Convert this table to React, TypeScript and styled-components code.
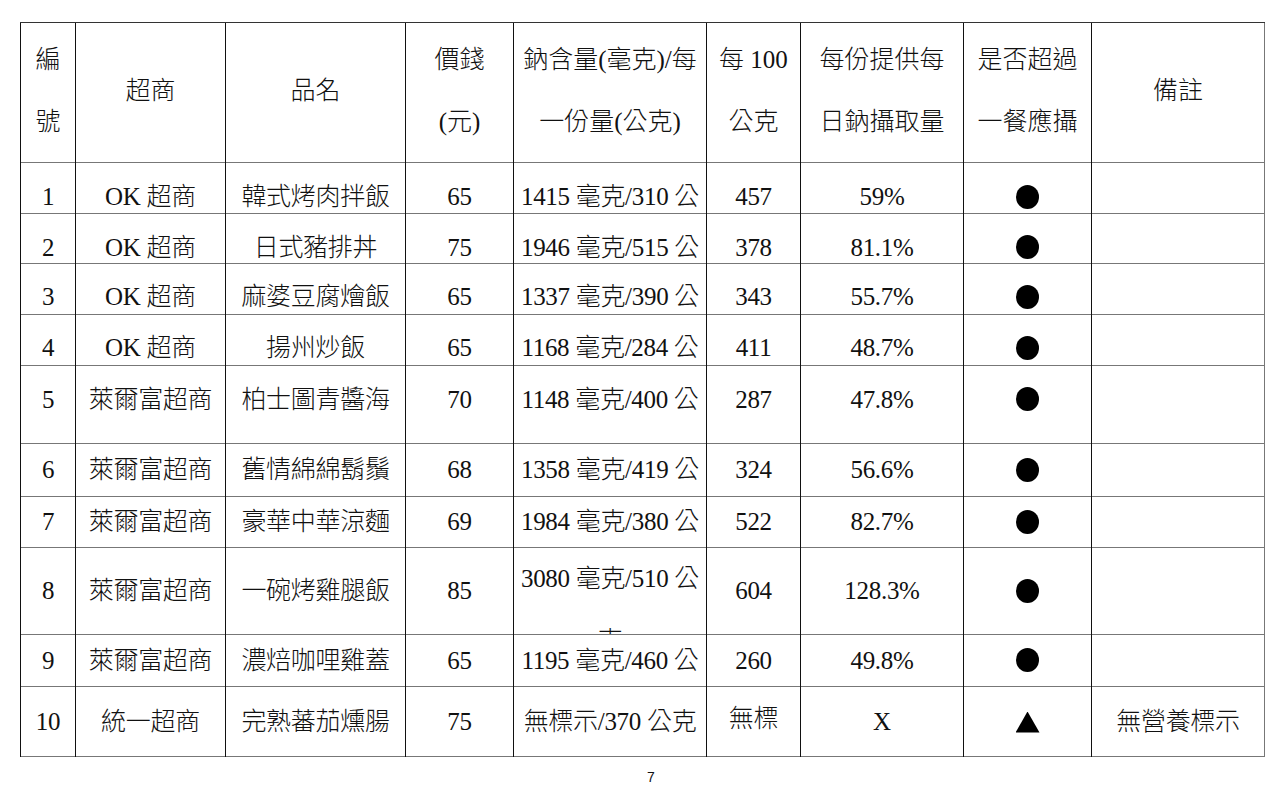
import React from 'react'
import styled, { createGlobalStyle } from 'styled-components'

const GlobalStyle = createGlobalStyle`
  html, body {
    margin: 0;
    padding: 0;
    background: #fff;
  }
  body {
    font-family: "Liberation Serif", "Noto Sans CJK TC", serif;
    color: #111;
  }
`

const Page = styled.div`
  width: 1282px;
  padding: 22px 0 0 20px;
  box-sizing: border-box;
`

const Sheet = styled.table`
  border-collapse: collapse;
  table-layout: fixed;
  width: 1244px;
  font-size: 25px;
  font-weight: 300;
  border-right: 1px solid #777;
  border-bottom: 1px solid #777;
`

const Row = styled.tr<{ $h: number }>`
  height: ${p => p.$h}px;
`

const Cell = styled.td<{ $shift?: number; $top?: boolean }>`
  border-left: 1px solid #111;
  border-top: 1px solid #777;
  text-align: center;
  vertical-align: ${p => (p.$top ? 'top' : 'middle')};
  line-height: 30px;
  white-space: nowrap;
  overflow: hidden;
  letter-spacing: -0.3px;
  padding: ${p => (p.$shift && p.$shift > 0 ? p.$shift * 2 : 0)}px 0
    ${p => (p.$shift && p.$shift < 0 ? -p.$shift * 2 : 0)}px;
`

const HeadCell = styled.th`
  border-left: 1px solid #111;
  border-top: 1px solid #333;
  font-weight: 300;
  text-align: center;
  vertical-align: middle;
  line-height: 62px;
  white-space: nowrap;
  padding: 0 0 4px;
`

const Clip = styled.div<{ $h: number }>`
  height: ${p => p.$h}px;
  overflow: hidden;
  line-height: 62px;
`

const Dot = styled.span`
  display: inline-block;
  width: 23px;
  height: 24px;
  border-radius: 50%;
  background: #000;
  vertical-align: middle;
  margin-bottom: 4px;
`

const Triangle = styled.span`
  display: inline-block;
  width: 24px;
  height: 21px;
  background: #000;
  clip-path: polygon(50% 0, 100% 100%, 0 100%);
  vertical-align: middle;
  margin-bottom: 4px;
`

const PageNo = styled.div`
  width: 1262px;
  margin-top: 12px;
  text-align: center;
  font-family: "Liberation Sans", sans-serif;
  font-size: 14px;
  line-height: 16px;
`

const widths = [55, 150, 180, 108, 193, 94, 163, 128, 173]

type Item = {
  no: string
  store: string
  name: string
  price: string
  sodium: string
  per100: string
  ratio: string
  mark: 'dot' | 'tri'
  note?: string
  h: number
  shift?: number
}

const items: Item[] = [
  { no: '1', store: 'OK 超商', name: '韓式烤肉拌飯', price: '65', sodium: '1415 毫克/310 公', per100: '457', ratio: '59%', mark: 'dot', h: 51, shift: 9 },
  { no: '2', store: 'OK 超商', name: '日式豬排丼', price: '75', sodium: '1946 毫克/515 公', per100: '378', ratio: '81.1%', mark: 'dot', h: 50, shift: 9 },
  { no: '3', store: 'OK 超商', name: '麻婆豆腐燴飯', price: '65', sodium: '1337 毫克/390 公', per100: '343', ratio: '55.7%', mark: 'dot', h: 51, shift: 8 },
  { no: '4', store: 'OK 超商', name: '揚州炒飯', price: '65', sodium: '1168 毫克/284 公', per100: '411', ratio: '48.7%', mark: 'dot', h: 51, shift: 8 },
  { no: '5', store: '萊爾富超商', name: '柏士圖青醬海', price: '70', sodium: '1148 毫克/400 公', per100: '287', ratio: '47.8%', mark: 'dot', h: 78, shift: -5 },
  { no: '6', store: '萊爾富超商', name: '舊情綿綿鬍鬚', price: '68', sodium: '1358 毫克/419 公', per100: '324', ratio: '56.6%', mark: 'dot', h: 53 },
  { no: '7', store: '萊爾富超商', name: '豪華中華涼麵', price: '69', sodium: '1984 毫克/380 公', per100: '522', ratio: '82.7%', mark: 'dot', h: 51 },
  { no: '8', store: '萊爾富超商', name: '一碗烤雞腿飯', price: '85', sodium: '3080 毫克/510 公', per100: '604', ratio: '128.3%', mark: 'dot', h: 87 },
  { no: '9', store: '萊爾富超商', name: '濃焙咖哩雞蓋', price: '65', sodium: '1195 毫克/460 公', per100: '260', ratio: '49.8%', mark: 'dot', h: 52 },
  { no: '10', store: '統一超商', name: '完熟蕃茄燻腸', price: '75', sodium: '無標示/370 公克', per100: '無標', ratio: 'X', mark: 'tri', note: '無營養標示', h: 70 },
]

export default function App() {
  return (
    <Page>
      <GlobalStyle />
      <Sheet>
        <colgroup>
          {widths.map((w, i) => (
            <col key={i} style={{ width: w }} />
          ))}
        </colgroup>
        <thead>
          <Row $h={140}>
            <HeadCell>編<br />號</HeadCell>
            <HeadCell>超商</HeadCell>
            <HeadCell>品名</HeadCell>
            <HeadCell>價錢<br />(元)</HeadCell>
            <HeadCell>鈉含量(毫克)/每<br />一份量(公克)</HeadCell>
            <HeadCell>每 100<br />公克</HeadCell>
            <HeadCell>每份提供每<br />日鈉攝取量</HeadCell>
            <HeadCell>是否超過<br />一餐應攝</HeadCell>
            <HeadCell>備註</HeadCell>
          </Row>
        </thead>
        <tbody>
          {items.map(it => (
            <Row key={it.no} $h={it.h}>
              <Cell $shift={it.shift}>{it.no}</Cell>
              <Cell $shift={it.shift}>{it.store}</Cell>
              <Cell $shift={it.shift}>{it.name}</Cell>
              <Cell $shift={it.shift}>{it.price}</Cell>
              {it.no === '8' ? (
                // the wrapped "克" is cut off by the row edge
                <Cell $top>
                  <Clip $h={it.h - 1}>
                    {it.sodium}
                    <br />克
                  </Clip>
                </Cell>
              ) : (
                <Cell $shift={it.shift}>{it.sodium}</Cell>
              )}
              <Cell $shift={it.no === '10' ? -3 : it.shift}>{it.per100}</Cell>
              <Cell $shift={it.shift}>{it.ratio}</Cell>
              <Cell $shift={it.shift}>{it.mark === 'dot' ? <Dot /> : <Triangle />}</Cell>
              <Cell $shift={it.shift}>{it.note}</Cell>
            </Row>
          ))}
        </tbody>
      </Sheet>
      <PageNo>7</PageNo>
    </Page>
  )
}
